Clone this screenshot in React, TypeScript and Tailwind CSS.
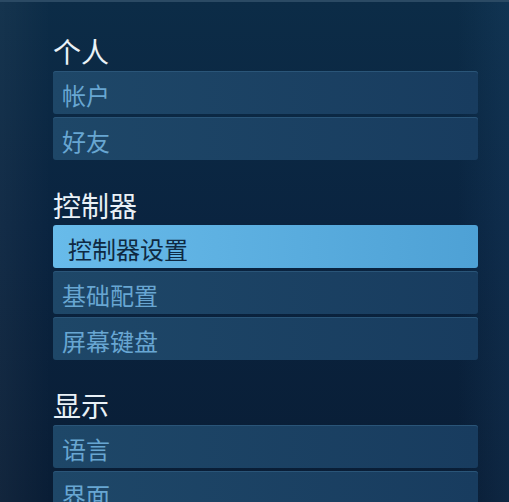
const font = { fontFamily: '"Noto Sans CJK SC", "Noto Sans", sans-serif' }

type Item = { label: string; active?: boolean }

const sections: { title: string; items: Item[] }[] = [
  { title: '个人', items: [{ label: '帐户' }, { label: '好友' }] },
  {
    title: '控制器',
    items: [{ label: '控制器设置', active: true }, { label: '基础配置' }, { label: '屏幕键盘' }],
  },
  { title: '显示', items: [{ label: '语言' }, { label: '界面' }] },
]

export default function App() {
  return (
    <div
      className="relative h-[502px] w-[509px] overflow-hidden bg-[linear-gradient(180deg,#0c2c47_0%,#0a2440_45%,#091d35_100%)]"
      style={font}
    >
      {/* edge glow */}
      <div className="pointer-events-none absolute inset-0 bg-[linear-gradient(90deg,#ffffff0a_0%,#00000000_10%,#00000000_90%,#3a78b01c_100%)]" />
      <div className="pointer-events-none absolute inset-x-0 top-0 h-[2px] bg-[#2b4a64]" />

      <div className="relative flex flex-col gap-[31px] pl-[53px] pr-[31px] pt-[37px]">
        {sections.map((s) => (
          <section key={s.title} className="flex flex-col">
            <h2 className="mb-[6px] text-[28px] leading-[28px] text-[#e9f1f7]">{s.title}</h2>
            <div className="flex flex-col gap-[3px]">
              {s.items.map((it) =>
                it.active ? (
                  <div
                    key={it.label}
                    className="h-[43px] rounded-[3px] bg-[linear-gradient(90deg,#68bbea,#4ea1d5)] pl-[15px] pt-[4px] text-[24px] leading-[39px] text-[#0f2942]"
                  >
                    {it.label}
                  </div>
                ) : (
                  <div
                    key={it.label}
                    className="h-[43px] rounded-[3px] bg-[linear-gradient(90deg,#1e4768,#183c5f)] pl-[9px] pt-[4px] text-[24px] leading-[39px] text-[#68a6d2] shadow-[0_1px_0_#2a5578_inset]"
                  >
                    {it.label}
                  </div>
                ),
              )}
            </div>
          </section>
        ))}
      </div>
    </div>
  )
}
